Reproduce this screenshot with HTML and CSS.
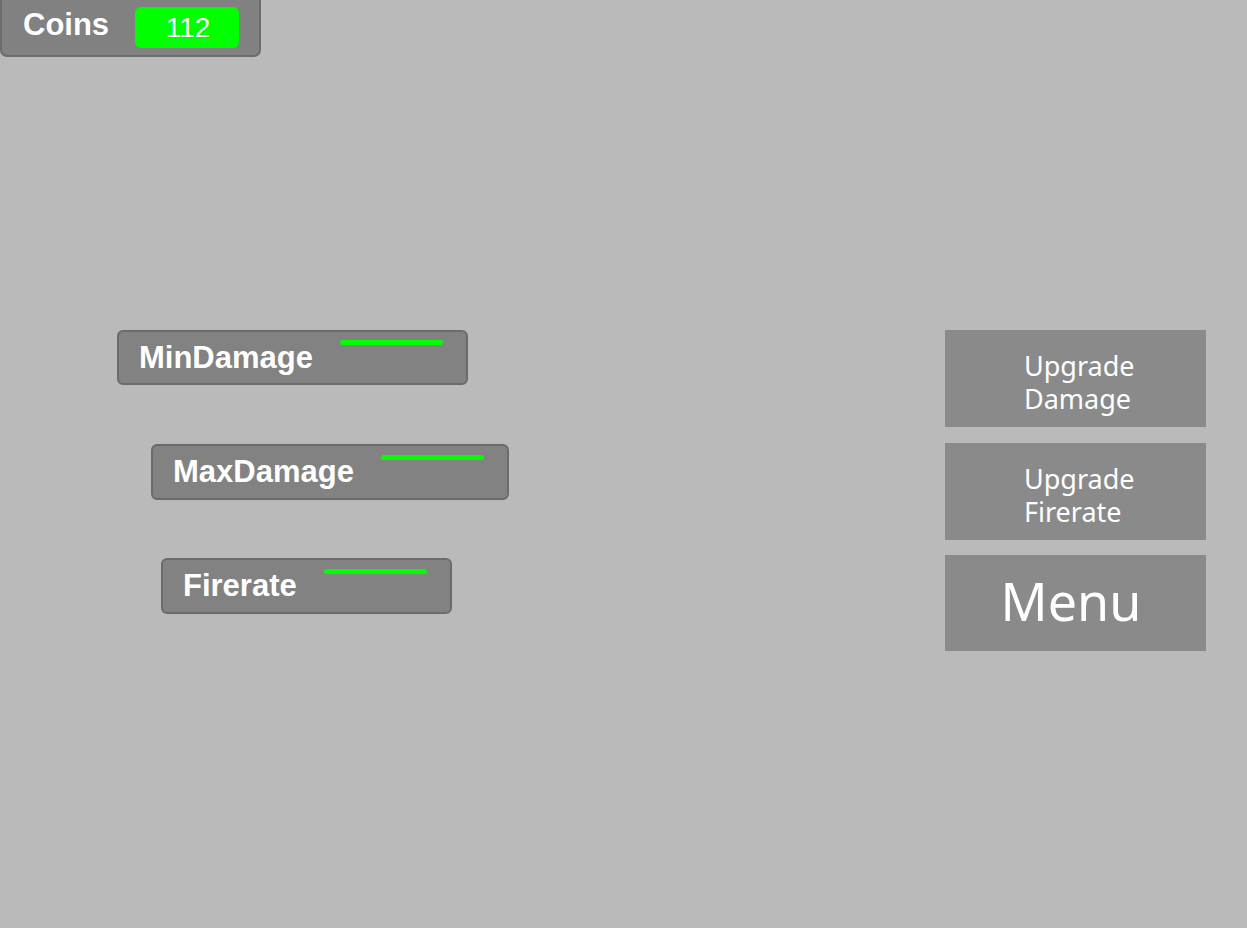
FILE: index.html
```html
<!DOCTYPE html>
<html>
<head>
<meta charset="utf-8">
<link rel="stylesheet" href="styles.css">
</head>
<body>
<div class="coins">
  <span class="coins-label">Coins</span>
  <span class="coins-value">112</span>
</div>
<div class="stage">
  <div class="stats">
    <div class="stat stat-min"><span class="stat-name">MinDamage</span><span class="bar"></span></div>
    <div class="stat stat-max"><span class="stat-name">MaxDamage</span><span class="bar"></span></div>
    <div class="stat stat-fire"><span class="stat-name">Firerate</span><span class="bar"></span></div>
  </div>
  <div class="actions">
    <div class="btn btn-upgrade"><span>Upgrade<br>Damage</span></div>
    <div class="btn btn-upgrade btn-second"><span>Upgrade<br>Firerate</span></div>
    <div class="btn btn-menu"><span>Menu</span></div>
  </div>
</div>
</body>
</html>
```
FILE: styles.css
```css
html, body {
  margin: 0;
  padding: 0;
}
body {
  background: #bababa;
  width: 1247px;
  height: 928px;
  overflow: hidden;
  font-family: "Liberation Sans", Arial, sans-serif;
  color: #fff;
}
.coins {
  box-sizing: border-box;
  width: 261px;
  height: 59px;
  margin-top: -2px;
  border: 2px solid #6c6c6c;
  border-radius: 0 0 7px 7px;
  background: #818181;
  display: flex;
  align-items: flex-start;
  padding: 7px 0 0 21px;
  gap: 26px;
}
.coins-label {
  font-weight: bold;
  font-size: 31px;
  line-height: 1;
  margin-top: 2px;
}
.coins-value {
  width: 104px;
  height: 41px;
  border-radius: 6px;
  background: #00ff00;
  font-size: 28px;
  display: flex;
  align-items: center;
  justify-content: center;
  padding-left: 2px;
  box-sizing: border-box;
}
.stage {
  display: flex;
  justify-content: space-between;
  margin-top: 273px;
  padding-right: 41px;
}
.stats {
  display: flex;
  flex-direction: column;
  align-items: flex-start;
}
.stat {
  box-sizing: border-box;
  height: 56px;
  border: 2px solid #6b6b6b;
  border-radius: 6px;
  background: #828282;
  display: flex;
  align-items: flex-start;
  padding: 8px 23px 0 20px;
  gap: 27px;
}
.stat-min { margin-left: 117px; height: 55px; }
.stat-max { margin-left: 151px; margin-top: 59px; }
.stat-fire { margin-left: 161px; margin-top: 58px; }
.stat-name {
  font-weight: bold;
  font-size: 31px;
  line-height: 1;
  margin-top: 2px;
}
.stat-max .bar, .stat-fire .bar { margin-top: 1px; }
.bar {
  width: 103px;
  height: 5px;
  border-radius: 3px;
  background: #00ff00;
}
.actions {
  display: flex;
  flex-direction: column;
  gap: 15px;
}
.btn {
  width: 261px;
  height: 97px;
  background: #8a8a8a;
  display: flex;
  align-items: center;
  font-family: "Noto Sans", "Open Sans", sans-serif;
}
.btn-second { margin-top: 1px; }
.btn-upgrade {
  font-size: 27px;
  line-height: 33px;
  padding-left: 79px;
  box-sizing: border-box;
}
.btn-upgrade span { margin-top: 6px; }
.btn-menu {
  height: 96px;
  justify-content: center;
  font-size: 52px;
  padding-right: 9px;
  box-sizing: border-box;
}
.btn-menu span { margin-top: -6px; }
```
